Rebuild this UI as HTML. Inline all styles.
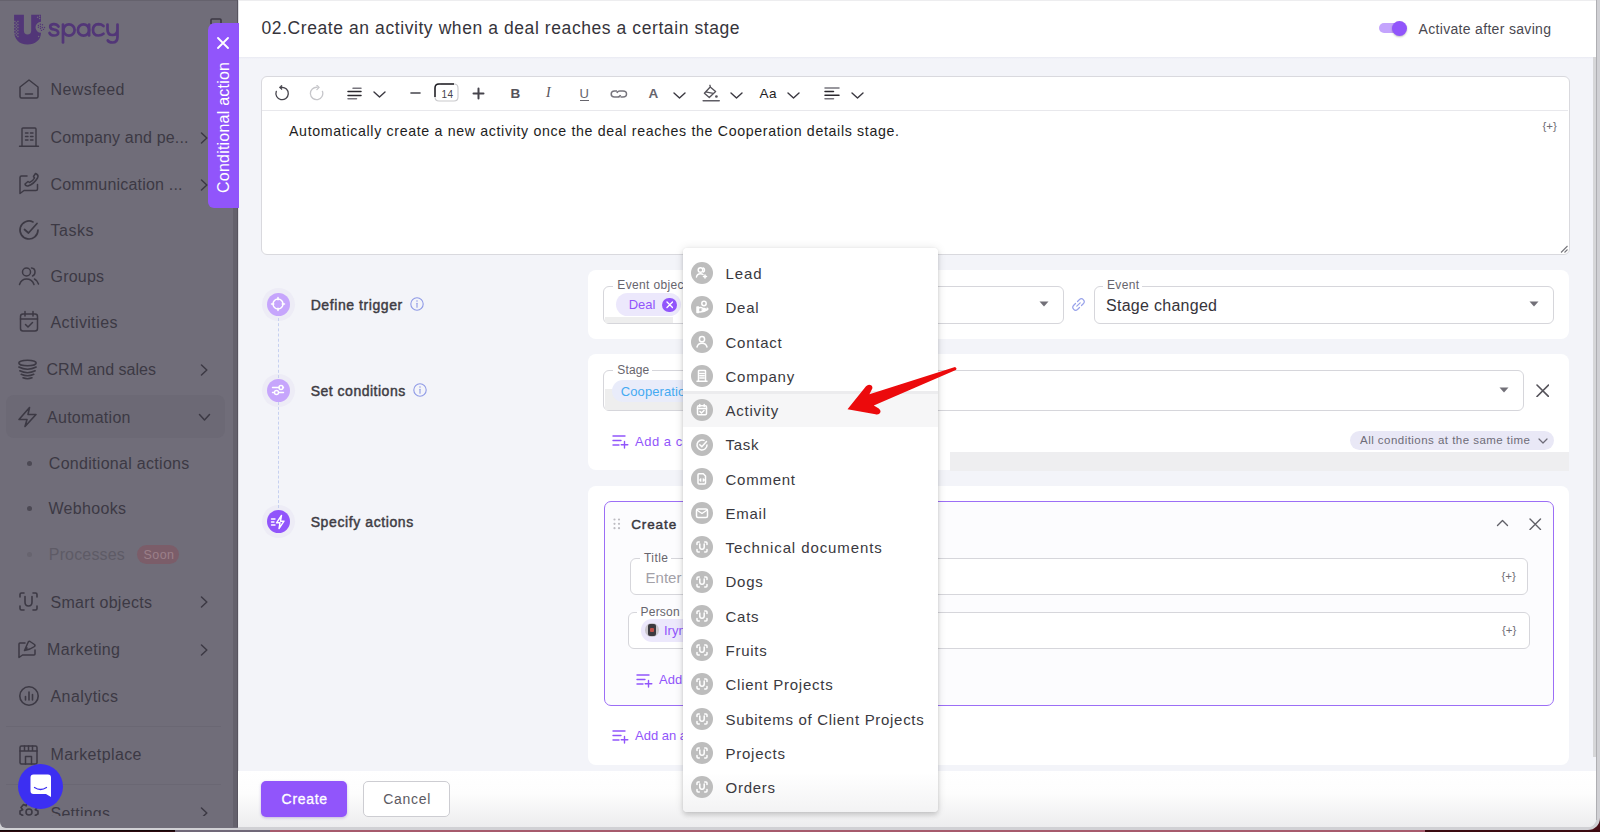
<!DOCTYPE html>
<html><head><meta charset="utf-8">
<style>
*{box-sizing:border-box;margin:0;padding:0}
html,body{width:1600px;height:832px;overflow:hidden;background:#4a0f18;font-family:"Liberation Sans",sans-serif}
.a{position:absolute}
.t{position:absolute;white-space:nowrap}
</style></head><body>
<div class="a" style="left:0px;top:830px;width:175px;height:2px;background:#2c0a0f;"></div>
<div class="a" style="left:0px;top:829.5px;width:1600px;height:1px;background:#150607;"></div>
<div class="a" style="left:175px;top:830px;width:95px;height:2px;background:#706878;"></div>
<div class="a" style="left:270px;top:830px;width:1155px;height:2px;background:#a65a6c;"></div>
<div class="a" style="left:1425px;top:830px;width:175px;height:2px;background:#3a0a10;"></div>
<div class="a" style="left:0px;top:0px;width:1600px;height:829.5px;background:#d0d0d4;border-radius:0 0 12px 0"></div>
<div class="a" style="left:1596px;top:0px;width:1.2px;height:820px;background:#aeaeb2;"></div>
<div class="a" style="left:0px;top:0px;width:238px;height:827.5px;background:#706d79;border-bottom-left-radius:6px"></div>
<svg class="a" style="left:13px;top:14px;" width="112" height="34" viewBox="0 0 112 34">
      <path d="M1.1 0.8 H10.9 V16.85 A3.65 3.65 0 0 0 18.2 16.85 V0.8 H28 V7.8 A5.5 5.5 0 0 0 28 18.8 C28 26 22 30.6 14.55 30.6 C6 30.6 1.1 25 1.1 17 Z" fill="#523678"/>
      <rect x="1.2" y="6.8" width="1.4" height="1.4" fill="#706d79"/><rect x="4.2" y="6.8" width="1.4" height="1.4" fill="#706d79"/><rect x="2.7" y="8.3" width="1.4" height="1.4" fill="#706d79"/><rect x="1.2" y="9.8" width="1.4" height="1.4" fill="#706d79"/><rect x="4.2" y="9.8" width="1.4" height="1.4" fill="#706d79"/><rect x="2.7" y="11.3" width="1.4" height="1.4" fill="#706d79"/><rect x="1.2" y="12.8" width="1.4" height="1.4" fill="#706d79"/><rect x="4.2" y="12.8" width="1.4" height="1.4" fill="#706d79"/><rect x="2.7" y="14.3" width="1.4" height="1.4" fill="#706d79"/><rect x="1.2" y="15.8" width="1.4" height="1.4" fill="#706d79"/><rect x="4.2" y="15.8" width="1.4" height="1.4" fill="#706d79"/><rect x="2.7" y="17.3" width="1.4" height="1.4" fill="#706d79"/><rect x="1.2" y="18.8" width="1.4" height="1.4" fill="#706d79"/><rect x="4.2" y="18.8" width="1.4" height="1.4" fill="#706d79"/><rect x="2.7" y="20.3" width="1.4" height="1.4" fill="#706d79"/><rect x="4.2" y="21.8" width="1.4" height="1.4" fill="#706d79"/>
      <g fill="#706d79"><circle cx="24.6" cy="3.2" r="0.75"/><circle cx="26.6" cy="2.2" r="0.75"/><circle cx="26.6" cy="4.4" r="0.75"/><circle cx="25.6" cy="22.6" r="0.75"/></g>
      <g fill="#523678"><circle cx="25.4" cy="11.4" r="0.7"/><circle cx="27.4" cy="10.3" r="0.7"/><circle cx="29.5" cy="10.8" r="0.7"/><circle cx="25.4" cy="13.3" r="0.7"/><circle cx="27.4" cy="12.5" r="0.7"/><circle cx="29.3" cy="13.5" r="0.7"/><circle cx="31.5" cy="13.5" r="0.7"/><circle cx="27.5" cy="14.5" r="0.7"/><circle cx="30.5" cy="15.4" r="0.7"/><circle cx="28.5" cy="16.4" r="0.7"/></g>
      <g fill="none" stroke="#523678" stroke-width="2.7" stroke-linecap="round">
        <path d="M45.5 12.5 Q44 10 40.5 10.2 Q37 10.5 37.2 13 Q37.5 15 41 15.5 Q45 16.2 45.2 18.5 Q45.3 21.5 41 21.5 Q37.5 21.5 36.5 19"/>
        <path d="M50 10.5 V28.5"/><circle cx="56" cy="16" r="5.6"/>
        <circle cx="70.5" cy="16" r="5.6"/><path d="M76.1 10.5 V21.5"/>
        <path d="M90.5 12 Q88.5 10.2 85.5 10.2 Q80 10.5 80 16 Q80 21.5 85.5 21.5 Q88.5 21.5 90.5 19.8"/>
        <path d="M94.5 10.5 V15.5 Q94.5 21 99.5 21 Q104.5 21 104.5 15.5 V10.5 M104.5 15 V23 Q104.5 28.5 99.5 28.5 Q96 28.5 94.8 26.5"/>
      </g></svg>
<svg class="a" style="left:210px;top:18px;" width="12" height="6" viewBox="0 0 12 6"><path d="M1 6 V2 Q1 1 2 1 H10 Q11 1 11 2 V6" fill="none" stroke="#3c3944" stroke-width="1.6"/></svg>
<svg class="a" style="left:18px;top:78px;" width="22" height="22" viewBox="0 0 22 22"><g fill="none" stroke="#3c3944" stroke-width="1.5" stroke-linecap="round" stroke-linejoin="round"><path d="M2 9 L11 2 L20 9 V18.5 Q20 20 18.5 20 H3.5 Q2 20 2 18.5 Z"/><path d="M7.5 16 H14.5"/></g></svg>
<div class="t" style="left:50.50px;top:82.00px;font-size:16px;line-height:16px;color:#3c3944;letter-spacing:0.406px;">Newsfeed</div>
<svg class="a" style="left:18px;top:126px;" width="22" height="22" viewBox="0 0 22 22"><g fill="none" stroke="#3c3944" stroke-width="1.4" stroke-linecap="round" stroke-linejoin="round"><path d="M4 20 V3 Q4 2 5 2 H17 Q18 2 18 3 V20"/><path d="M1.5 20.3 H20.5"/><path d="M7.5 7 H10 M12.5 7 H15 M7.5 10.5 H10 M12.5 10.5 H15 M7.5 14 H10 M12.5 14 H15"/></g></svg>
<div class="t" style="left:50.50px;top:130.00px;font-size:16px;line-height:16px;color:#3c3944;letter-spacing:0.175px;">Company and pe...</div>
<svg class="a" style="left:200px;top:131.5px;" width="9" height="12" viewBox="0 0 9 12"><path d="M1.5 1 L6.8 6 L1.5 11" fill="none" stroke="#3c3944" stroke-width="1.5" stroke-linecap="round" stroke-linejoin="round"/></svg>
<svg class="a" style="left:18px;top:172px;" width="23" height="23" viewBox="0 0 23 23"><g fill="none" stroke="#3c3944" stroke-width="1.5" stroke-linecap="round" stroke-linejoin="round"><path d="M9 4 H3.5 Q2 4 2 5.5 V21.5 L6 18.5 H18 Q19.5 18.5 19.5 17 V12.5"/><path d="M7 12 Q7.5 14.5 10 14 Q16 12 19.5 6 Q21 3.5 18.5 2 L17.5 1.5 L15.5 4.5 L16.5 6 Q15 9 11.5 10.5 L10 9.5 Z"/></g></svg>
<div class="t" style="left:50.50px;top:177.00px;font-size:16px;line-height:16px;color:#3c3944;letter-spacing:0.191px;">Communication ...</div>
<svg class="a" style="left:200px;top:179px;" width="9" height="12" viewBox="0 0 9 12"><path d="M1.5 1 L6.8 6 L1.5 11" fill="none" stroke="#3c3944" stroke-width="1.5" stroke-linecap="round" stroke-linejoin="round"/></svg>
<svg class="a" style="left:18px;top:219px;" width="22" height="22" viewBox="0 0 22 22"><g fill="none" stroke="#3c3944" stroke-width="1.7" stroke-linecap="round" stroke-linejoin="round"><path d="M20 11 A9 9 0 1 1 15 2.9"/><path d="M6.5 10.5 L10.5 14 L19 4.5"/></g></svg>
<div class="t" style="left:50.50px;top:223.00px;font-size:16px;line-height:16px;color:#3c3944;letter-spacing:0.523px;">Tasks</div>
<svg class="a" style="left:18px;top:266px;" width="22" height="20" viewBox="0 0 22 20"><g fill="none" stroke="#3c3944" stroke-width="1.5" stroke-linecap="round" stroke-linejoin="round"><circle cx="8.5" cy="6" r="4"/><path d="M1.5 18.5 Q3.5 13 8.5 13 Q14 13 16 18.5"/><path d="M13.5 2 Q17 2.3 17 6 Q17 9 14.5 10 M16.5 13 Q19.5 14.5 20.5 18"/></g></svg>
<div class="t" style="left:50.50px;top:269.00px;font-size:16px;line-height:16px;color:#3c3944;letter-spacing:0.206px;">Groups</div>
<svg class="a" style="left:18px;top:310px;" width="22" height="22" viewBox="0 0 22 22"><g fill="none" stroke="#3c3944" stroke-width="1.5" stroke-linecap="round" stroke-linejoin="round"><rect x="2.5" y="4" width="17" height="17" rx="2.5"/><path d="M2.5 9 H19.5 M7 1.5 V6 M15 1.5 V6 M7.5 14.5 L10 17 L14.5 12.5"/></g></svg>
<div class="t" style="left:50.50px;top:315.00px;font-size:16px;line-height:16px;color:#3c3944;letter-spacing:0.431px;">Activities</div>
<svg class="a" style="left:17px;top:359px;" width="21" height="21" viewBox="0 0 21 21"><g fill="none" stroke="#3c3944" stroke-width="1.5" stroke-linecap="round" stroke-linejoin="round"><ellipse cx="10.5" cy="4" rx="8.7" ry="2.8"/><path d="M1.8 8 Q10.5 12.5 19.2 8 M2.8 11.8 Q10.5 15.5 18.2 11.8 M4.2 15.3 Q10.5 18.3 16.8 15.3 M6 18.8 Q10.5 20.5 15 18.8"/></g></svg>
<div class="t" style="left:46.50px;top:362.00px;font-size:16px;line-height:16px;color:#3c3944;letter-spacing:0.010px;">CRM and sales</div>
<svg class="a" style="left:200px;top:364px;" width="9" height="12" viewBox="0 0 9 12"><path d="M1.5 1 L6.8 6 L1.5 11" fill="none" stroke="#3c3944" stroke-width="1.5" stroke-linecap="round" stroke-linejoin="round"/></svg>
<div class="a" style="left:6px;top:395px;width:219px;height:43px;background:#6c6975;border-radius:8px"></div>
<svg class="a" style="left:17px;top:406px;" width="21" height="22" viewBox="0 0 21 22"><g fill="none" stroke="#3c3944" stroke-width="1.6" stroke-linecap="round" stroke-linejoin="round"><path d="M12.5 1.5 L2 13.5 H10 L8 20.5 L19 8.5 H11 Z"/></g></svg>
<div class="t" style="left:47.00px;top:410.00px;font-size:16px;line-height:16px;color:#3c3944;letter-spacing:0.285px;">Automation</div>
<svg class="a" style="left:198px;top:413px;" width="13" height="9" viewBox="0 0 13 9"><path d="M1.5 1.5 L6.5 7 L11.5 1.5" fill="none" stroke="#3c3944" stroke-width="1.5" stroke-linecap="round" stroke-linejoin="round"/></svg>
<div class="a" style="left:26.5px;top:460.5px;width:5px;height:5px;background:#4c4954;border-radius:50%"></div>
<div class="t" style="left:48.80px;top:456.00px;font-size:16px;line-height:16px;color:#3c3944;letter-spacing:0.294px;">Conditional actions</div>
<div class="a" style="left:26.5px;top:506px;width:5px;height:5px;background:#4c4954;border-radius:50%"></div>
<div class="t" style="left:48.50px;top:501.00px;font-size:16px;line-height:16px;color:#3c3944;letter-spacing:0.312px;">Webhooks</div>
<div class="a" style="left:26.5px;top:552px;width:5px;height:5px;background:#67646f;border-radius:50%"></div>
<div class="t" style="left:48.80px;top:547.00px;font-size:16px;line-height:16px;color:#5e5b66;letter-spacing:0.162px;">Processes</div>
<div class="a" style="left:137px;top:545px;width:42px;height:19px;background:#7b5d69;border-radius:10px"></div>
<div class="t" style="left:143.50px;top:549.00px;font-size:12.5px;line-height:12.5px;color:#9b8089;letter-spacing:0.432px;">Soon</div>
<svg class="a" style="left:18px;top:591px;" width="21" height="21" viewBox="0 0 21 21"><g fill="none" stroke="#3c3944" stroke-width="1.6" stroke-linecap="round" stroke-linejoin="round"><path d="M2 6 V3.5 Q2 2 3.5 2 H6 M15 2 H17.5 Q19 2 19 3.5 V6 M19 15 V17.5 Q19 19 17.5 19 H15 M6 19 H3.5 Q2 19 2 17.5 V15"/><path d="M7 5.5 V11 Q7 15 10.5 15 Q14 15 14 11 V5.5"/></g></svg>
<div class="t" style="left:50.50px;top:595.00px;font-size:16px;line-height:16px;color:#3c3944;letter-spacing:0.307px;">Smart objects</div>
<svg class="a" style="left:200px;top:596px;" width="9" height="12" viewBox="0 0 9 12"><path d="M1.5 1 L6.8 6 L1.5 11" fill="none" stroke="#3c3944" stroke-width="1.5" stroke-linecap="round" stroke-linejoin="round"/></svg>
<svg class="a" style="left:17px;top:639px;" width="21" height="20" viewBox="0 0 21 20"><g fill="none" stroke="#3c3944" stroke-width="1.5" stroke-linecap="round" stroke-linejoin="round"><path d="M8 4 H3 Q2 4 2 5 V18.5 L5.5 16 H17 Q18 16 18 15 V11"/><path d="M7.5 11.5 L11 3.5 Q11.5 2 13 2.5 L17.5 5.5 Q18.5 6.5 17.5 7.5 Q13.5 10.5 7.5 11.5 Z M10 9 Q9 11 7.5 11.5"/></g></svg>
<div class="t" style="left:47.00px;top:642.00px;font-size:16px;line-height:16px;color:#3c3944;letter-spacing:0.344px;">Marketing</div>
<svg class="a" style="left:200px;top:643.5px;" width="9" height="12" viewBox="0 0 9 12"><path d="M1.5 1 L6.8 6 L1.5 11" fill="none" stroke="#3c3944" stroke-width="1.5" stroke-linecap="round" stroke-linejoin="round"/></svg>
<svg class="a" style="left:18px;top:685px;" width="22" height="22" viewBox="0 0 22 22"><g fill="none" stroke="#3c3944" stroke-width="1.6" stroke-linecap="round" stroke-linejoin="round"><circle cx="11" cy="11" r="9.2"/><path d="M7.5 15 V11.5 M11 15 V7 M14.5 15 V9.5"/></g></svg>
<div class="t" style="left:50.50px;top:689.00px;font-size:16px;line-height:16px;color:#3c3944;letter-spacing:0.434px;">Analytics</div>
<div class="a" style="left:6px;top:726px;width:215px;height:1px;background:#6a6773;"></div>
<svg class="a" style="left:18px;top:744px;" width="21" height="21" viewBox="0 0 21 21"><g fill="none" stroke="#3c3944" stroke-width="1.5" stroke-linecap="round" stroke-linejoin="round"><rect x="2" y="2" width="17" height="18" rx="1.5"/><path d="M2 7 H19 M6.5 2 V7 M10.5 2 V7 M14.5 2 V7 M7.5 20 V12.5 H13.5 V20"/></g></svg>
<div class="t" style="left:50.50px;top:747.00px;font-size:16px;line-height:16px;color:#3c3944;letter-spacing:0.384px;">Marketplace</div>
<div class="a" style="left:6px;top:784px;width:215px;height:1px;background:#6a6773;"></div>
<div class="a" style="left:0;top:790px;width:232px;height:26px;overflow:hidden"><svg class="a" style="left:18px;top:11px;" width="22" height="22" viewBox="0 0 22 22"><g fill="none" stroke="#3c3944" stroke-width="1.6" stroke-linecap="round" stroke-linejoin="round"><circle cx="11" cy="11" r="3"/><path d="M9 2 H13 L13.8 4.8 L16.5 3.5 L19 6.5 L17.3 8.8 L20 10 V13 L17.3 14.2 L19 16.5 L16.5 19.5 L13.8 18.2 L13 21 H9 L8.2 18.2 L5.5 19.5 L3 16.5 L4.7 14.2 L2 13 V10 L4.7 8.8 L3 6.5 L5.5 3.5 L8.2 4.8 Z"/></g></svg>
<div class="t" style="left:50.50px;top:16.00px;font-size:16px;line-height:16px;color:#3c3944;letter-spacing:0.241px;">Settings</div>
<svg class="a" style="left:200px;top:17px;" width="9" height="12" viewBox="0 0 9 12"><path d="M1.5 1 L6.8 6 L1.5 11" fill="none" stroke="#3c3944" stroke-width="1.5" stroke-linecap="round" stroke-linejoin="round"/></svg>
</div><div class="a" style="left:233px;top:208px;width:4px;height:619px;background:#64616c;"></div>
<div class="a" style="left:0px;top:0px;width:238px;height:1px;background:#65626d;"></div>
<div class="a" style="left:237px;top:0px;width:1px;height:827px;background:#57545f;"></div>
<div class="a" style="left:17.5px;top:763.5px;width:45px;height:45px;background:#3c2ff2;border-radius:50%"></div>
<svg class="a" style="left:30px;top:774px;" width="22" height="24" viewBox="0 0 22 24"><path d="M3.5 0.5 H18 Q21 0.5 21 3.5 V23 L16 20 H3.5 Q0.5 20 0.5 17 V3.5 Q0.5 0.5 3.5 0.5 Z" fill="#fff"/><path d="M4.5 13.5 Q10.5 17.5 16.5 13.5" fill="none" stroke="#3c2ff2" stroke-width="1.3" stroke-linecap="round"/></svg>
<div class="a" style="left:238px;top:0px;width:1358px;height:827px;background:#f3f4f9;border-bottom-right-radius:8px"></div>
<div class="a" style="left:238px;top:0px;width:1358px;height:57px;background:#fff;"></div>
<div class="a" style="left:238px;top:0px;width:1358px;height:1px;background:#ededef;"></div>
<div class="a" style="left:238px;top:57px;width:1358px;height:2px;background:linear-gradient(#e9eaf2,#f3f4f9);"></div>
<div class="a" style="left:238px;top:0px;width:1px;height:827px;background:#dcdce2;"></div>
<div class="t" style="left:261.50px;top:20.00px;font-size:17.5px;line-height:17.5px;color:#36343b;letter-spacing:0.580px;">02.Create an activity when a deal reaches a certain stage</div>
<div class="a" style="left:1379px;top:23px;width:22px;height:10px;background:#c4a4fd;border-radius:5px"></div>
<div class="a" style="left:1392px;top:20.5px;width:15px;height:15px;background:#9155fb;border-radius:50%;box-shadow:0 1px 2px rgba(0,0,0,.25)"></div>
<div class="t" style="left:1418.50px;top:22.00px;font-size:14px;line-height:14px;color:#4a4850;letter-spacing:0.322px;">Activate after saving</div>
<div class="a" style="left:1593px;top:57px;width:3px;height:700px;background:#d6d6d8;"></div>
<div class="a" style="left:261px;top:76px;width:1308.5px;height:179px;background:#fff;border:1px solid #d9d9de;border-radius:6px"></div>
<div class="a" style="left:262px;top:110px;width:1306px;height:1px;background:#e8e8ec;"></div>
<div class="t" style="left:289.00px;top:124.00px;font-size:14.2px;line-height:14.2px;color:#1e1d22;letter-spacing:0.657px;">Automatically create a new activity once the deal reaches the Cooperation details stage.</div>
<div class="t" style="left:1542.50px;top:121.00px;font-size:11.5px;line-height:11.5px;color:#6f6d75;">{+}</div>
<svg class="a" style="left:1560px;top:245px;" width="9" height="9" viewBox="0 0 9 9"><path d="M7.5 1 L1 7.5 M7.5 4.5 L4.5 7.5" stroke="#77777d" stroke-width="1.1"/></svg>
<svg class="a" style="left:274px;top:85px;" width="16" height="16" viewBox="0 0 16 16"><path d="M7.6 2.3 A6.2 6.2 0 1 1 2.3 6.3" fill="none" stroke="#46444c" stroke-width="1.3" stroke-linecap="round"/><path d="M5.2 2.4 L7.8 0.1 V4.7 Z" fill="#46444c" stroke="#46444c" stroke-width="0.6" stroke-linejoin="round"/></svg>
<svg class="a" style="left:308px;top:85px;" width="16" height="16" viewBox="0 0 16 16"><g fill="none" stroke="#c6c6ca" stroke-width="1.3" stroke-linecap="round" stroke-linejoin="round"><path d="M9.2 2.3 A6.2 6.2 0 1 0 14.4 6.3"/><path d="M8.9 0.3 L11.1 2.4 L8.9 4.6"/></g></svg>
<svg class="a" style="left:347px;top:87px;" width="15" height="13" viewBox="0 0 15 13"><g stroke-width="1.5" stroke-linecap="round"><path d="M6 1.2 H14" stroke="#77757d"/><path d="M1 4.5 H14 M1 8.5 H14" stroke="#2a282e"/><path d="M1 11.8 H9.5" stroke="#77757d"/></g></svg>
<svg class="a" style="left:373px;top:91px;" width="13" height="7" viewBox="0 0 13 7"><path d="M1 1 L6.5 6 L12 1" fill="none" stroke="#3a3840" stroke-width="1.4" stroke-linecap="round" stroke-linejoin="round"/></svg>
<svg class="a" style="left:410px;top:92px;" width="11" height="2" viewBox="0 0 11 2"><path d="M1 1 H10" stroke="#46444c" stroke-width="1.6" stroke-linecap="round"/></svg>
<svg class="a" style="left:434px;top:83px;" width="25" height="19" viewBox="0 0 25 19"><path d="M7 1 H20 Q24 1 24 5 V14 Q24 18 20 18 H5 Q1 18 1 14 V5 Q1 1 5 1" fill="none" stroke="#c9c9cc" stroke-width="1.1"/><path d="M1 14 V5 Q1 1 5 1 H20" fill="none" stroke="#1e1d22" stroke-width="1.5"/></svg>
<div class="t" style="left:441.50px;top:90.00px;font-size:10px;line-height:10px;color:#46444c;letter-spacing:0.375px;">14</div>
<svg class="a" style="left:472px;top:87px;" width="13" height="13" viewBox="0 0 13 13"><path d="M6.5 1.5 V11.5 M1.5 6.5 H11.5" stroke="#46444c" stroke-width="2" stroke-linecap="round"/></svg>
<div class="t" style="left:510.50px;top:87.00px;font-size:13.5px;line-height:13.5px;color:#55535a;font-weight:700;">B</div>
<div class="t" style="left:546.00px;top:86.00px;font-size:14px;line-height:14px;color:#55535a;font-family:'Liberation Serif',serif;"><i>I</i></div>
<div class="t" style="left:579.50px;top:87.00px;font-size:13px;line-height:13px;color:#66646c;">U</div>
<div class="a" style="left:580px;top:100px;width:9px;height:1.2px;background:#66646c;"></div>
<svg class="a" style="left:610px;top:89px;" width="18" height="10" viewBox="0 0 18 10"><g fill="none" stroke="#77757d" stroke-width="1.5"><path d="M7 2 H4.5 Q1.2 2 1.2 5 Q1.2 8 4.5 8 H7.5 Q10 8 10.5 6"/><path d="M10.5 8 H13 Q16.5 8 16.5 5 Q16.5 2 13 2 H10 Q7.5 2 7 4"/></g></svg>
<div class="t" style="left:648.50px;top:87.00px;font-size:13.5px;line-height:13.5px;color:#66646c;font-weight:700;">A</div>
<svg class="a" style="left:672.5px;top:91.5px;" width="13" height="7" viewBox="0 0 13 7"><path d="M1 1 L6.5 6 L12 1" fill="none" stroke="#3a3840" stroke-width="1.4" stroke-linecap="round" stroke-linejoin="round"/></svg>
<svg class="a" style="left:702px;top:84px;" width="19" height="18" viewBox="0 0 19 18"><g fill="none" stroke="#55535a" stroke-width="1.35" stroke-linejoin="round" stroke-linecap="round"><path d="M8.2 3 L13.6 7.6 L7.3 13.5 L2.4 9.3 Z M3.6 7.9 L11.2 9.4 M7.9 1.3 L8.4 3.1"/></g><circle cx="14.4" cy="12.5" r="1.35" fill="#55535a"/><path d="M1.2 16.8 H17.2" stroke="#5f5d65" stroke-width="1.6" stroke-linecap="round"/></svg>
<svg class="a" style="left:729.5px;top:91.5px;" width="13" height="7" viewBox="0 0 13 7"><path d="M1 1 L6.5 6 L12 1" fill="none" stroke="#3a3840" stroke-width="1.4" stroke-linecap="round" stroke-linejoin="round"/></svg>
<div class="t" style="left:759.50px;top:87.00px;font-size:13.5px;line-height:13.5px;color:#1e1d22;letter-spacing:0.484px;">Aa</div>
<svg class="a" style="left:786.5px;top:91.5px;" width="13" height="7" viewBox="0 0 13 7"><path d="M1 1 L6.5 6 L12 1" fill="none" stroke="#3a3840" stroke-width="1.4" stroke-linecap="round" stroke-linejoin="round"/></svg>
<svg class="a" style="left:824px;top:87px;" width="16" height="13" viewBox="0 0 16 13"><g stroke-width="1.5" stroke-linecap="round"><path d="M1 1 H15" stroke="#77757d"/><path d="M1 4.5 H9.5 M1 8.3 H15" stroke="#2a282e"/><path d="M1 11.8 H9.5" stroke="#77757d"/></g></svg>
<svg class="a" style="left:850.5px;top:91.5px;" width="13" height="7" viewBox="0 0 13 7"><path d="M1 1 L6.5 6 L12 1" fill="none" stroke="#3a3840" stroke-width="1.4" stroke-linecap="round" stroke-linejoin="round"/></svg>
<div class="a" style="left:261.9px;top:287.8px;width:33px;height:33px;background:#edecf6;border-radius:50%"></div>
<div class="a" style="left:261.9px;top:373.8px;width:33px;height:33px;background:#edecf6;border-radius:50%"></div>
<div class="a" style="left:261.9px;top:505.0px;width:33px;height:33px;background:#edecf6;border-radius:50%"></div>
<div class="a" style="left:278px;top:318px;width:0;height:60px;border-left:1px dashed #c6d0f0"></div>
<div class="a" style="left:278px;top:402px;width:0;height:106px;border-left:1px dashed #c6d0f0"></div>
<div class="a" style="left:266.9px;top:292.8px;width:23px;height:23px;background:#c6a5fc;border-radius:50%"></div>
<svg class="a" style="left:270.4px;top:296.3px;" width="16" height="16" viewBox="0 0 16 16"><g fill="none" stroke="#fff" stroke-width="1.5" stroke-linecap="round"><circle cx="8" cy="8" r="5"/><path d="M8 1.5 V3.8 M8 12.2 V14.5 M1.5 8 H3.8 M12.2 8 H14.5"/></g></svg>
<div class="t" style="left:310.70px;top:298.00px;font-size:14px;line-height:14px;color:#3e3c44;letter-spacing:0.573px;-webkit-text-stroke:0.45px #3e3c44;">Define trigger</div>
<svg class="a" style="left:409.8px;top:297.3px;" width="14" height="14" viewBox="0 0 14 14"><g fill="none" stroke="#8f9ae6" stroke-width="1.1"><circle cx="7" cy="7" r="6.2"/><path d="M7 6.2 V10.3" stroke-linecap="round"/></g><circle cx="7" cy="4.1" r="0.75" fill="#8f9ae6"/></svg>
<div class="a" style="left:266.9px;top:378.8px;width:23px;height:23px;background:#c6a5fc;border-radius:50%"></div>
<svg class="a" style="left:270.4px;top:382.3px;" width="16" height="16" viewBox="0 0 16 16"><g fill="none" stroke="#fff" stroke-width="1.4" stroke-linecap="round"><path d="M2.5 5.5 H9 M13 5.5 H13.5 M2.5 10.5 H4 M9 10.5 H13.5"/><circle cx="11" cy="5.5" r="2"/><circle cx="6.5" cy="10.5" r="2"/></g></svg>
<div class="t" style="left:310.70px;top:384.00px;font-size:14px;line-height:14px;color:#3e3c44;letter-spacing:0.504px;-webkit-text-stroke:0.45px #3e3c44;">Set conditions</div>
<svg class="a" style="left:412.7px;top:383.3px;" width="14" height="14" viewBox="0 0 14 14"><g fill="none" stroke="#8f9ae6" stroke-width="1.1"><circle cx="7" cy="7" r="6.2"/><path d="M7 6.2 V10.3" stroke-linecap="round"/></g><circle cx="7" cy="4.1" r="0.75" fill="#8f9ae6"/></svg>
<div class="a" style="left:266.9px;top:510.0px;width:23px;height:23px;background:#9155fb;border-radius:50%"></div>
<svg class="a" style="left:270.4px;top:513.5px;" width="16" height="16" viewBox="0 0 16 16"><g fill="none" stroke="#fff" stroke-width="1.4" stroke-linecap="round" stroke-linejoin="round"><path d="M1.5 5 H5 M1.5 8 H4 M1.5 11 H5"/><path d="M11.5 1.5 L6.5 8.8 H10 L9 14.5 L14 7.2 H10.5 Z"/></g></svg>
<div class="t" style="left:310.70px;top:515.00px;font-size:14px;line-height:14px;color:#3e3c44;letter-spacing:0.595px;-webkit-text-stroke:0.45px #3e3c44;">Specify actions</div>
<div class="a" style="left:588px;top:270px;width:981px;height:69px;background:#fff;border-radius:8px"></div>
<div class="a" style="left:603px;top:285.5px;width:460.5px;height:38px;background:#fff;border:1px solid #d6d6db;border-radius:6px"></div>
<div class="a" style="left:613px;top:284.5px;width:77px;height:2px;background:#fff;"></div>
<div class="t" style="left:617.30px;top:279.00px;font-size:12px;line-height:12px;color:#67656d;letter-spacing:0.359px;">Event object</div>
<div class="a" style="left:605px;top:317px;width:68px;height:6px;background:#eeeeee;"></div>
<div class="a" style="left:616px;top:293px;width:65px;height:23px;background:#ece8fc;border-radius:12px"></div>
<div class="t" style="left:628.80px;top:298.00px;font-size:13px;line-height:13px;color:#9155fb;letter-spacing:-0.083px;">Deal</div>
<div class="a" style="left:662px;top:297.5px;width:14.5px;height:14.5px;background:#9155fb;border-radius:50%"></div>
<svg class="a" style="left:665.5px;top:301px;" width="7.5" height="7.5" viewBox="0 0 7.5 7.5"><path d="M1 1 L6.5 6.5 M6.5 1 L1 6.5" stroke="#fff" stroke-width="1.4" stroke-linecap="round"/></svg>
<svg class="a" style="left:1039px;top:301.4px;" width="10" height="6" viewBox="0 0 10 6"><path d="M0.5 0.5 H9.5 L5 5.5 Z" fill="#727078"/></svg>
<svg class="a" style="left:1071px;top:297px;" width="15" height="15" viewBox="0 0 15 15"><g fill="none" stroke="#98a2ea" stroke-width="1.2" stroke-linecap="round"><path d="M5.8 9.2 L9.2 5.8 M6.5 4.5 L8.5 2.5 Q10.5 0.8 12.3 2.7 Q14.2 4.5 12.5 6.5 L10.5 8.5 M8.5 10.5 L6.5 12.5 Q4.5 14.2 2.7 12.3 Q0.8 10.5 2.5 8.5 L4.5 6.5"/></g></svg>
<div class="a" style="left:1094px;top:285.5px;width:460px;height:38px;background:#fff;border:1px solid #d6d6db;border-radius:6px"></div>
<div class="a" style="left:1103px;top:284.5px;width:39px;height:2px;background:#fff;"></div>
<div class="t" style="left:1107.00px;top:279.00px;font-size:12px;line-height:12px;color:#67656d;letter-spacing:0.328px;">Event</div>
<div class="t" style="left:1106.00px;top:298.00px;font-size:16px;line-height:16px;color:#36343b;letter-spacing:0.279px;">Stage changed</div>
<svg class="a" style="left:1528.8px;top:301.4px;" width="10" height="6" viewBox="0 0 10 6"><path d="M0.5 0.5 H9.5 L5 5.5 Z" fill="#727078"/></svg>
<div class="a" style="left:588px;top:354px;width:981px;height:116px;background:#fff;border-radius:8px"></div>
<div class="a" style="left:603px;top:369.8px;width:920.5px;height:41px;background:#fff;border:1px solid #d6d6db;border-radius:6px"></div>
<div class="a" style="left:613px;top:368.8px;width:39px;height:2px;background:#fff;"></div>
<div class="t" style="left:617.30px;top:364.00px;font-size:12px;line-height:12px;color:#67656d;letter-spacing:0.160px;">Stage</div>
<div class="a" style="left:605px;top:388.5px;width:80px;height:21px;background:#eeeeee;"></div>
<div class="a" style="left:612px;top:380px;width:90px;height:22px;background:#e9ecfa;border-radius:11px"></div>
<div class="t" style="left:620.70px;top:385.00px;font-size:13px;line-height:13px;color:#45aaf2;letter-spacing:0.117px;">Cooperation</div>
<svg class="a" style="left:1498.7px;top:387.3px;" width="10" height="6" viewBox="0 0 10 6"><path d="M0.5 0.5 H9.5 L5 5.5 Z" fill="#727078"/></svg>
<svg class="a" style="left:1535.5px;top:383.5px;" width="13.5" height="13.5" viewBox="0 0 13.5 13.5"><path d="M1 1 L12.5 12.5 M12.5 1 L1 12.5" stroke="#55535a" stroke-width="1.6" stroke-linecap="round"/></svg>
<svg class="a" style="left:612px;top:434px;" width="17" height="15" viewBox="0 0 17 15"><g fill="none" stroke="#9155fb" stroke-width="1.4" stroke-linecap="round"><path d="M1 2 H13 M1 6.5 H9 M1 11 H7 M12.5 7.5 V14 M9.2 10.8 H15.8"/></g></svg>
<div class="t" style="left:635.00px;top:435.00px;font-size:13px;line-height:13px;color:#9155fb;letter-spacing:0.527px;">Add a condition</div>
<div class="a" style="left:1350px;top:431.3px;width:204px;height:18.5px;background:#e9e8f6;border-radius:10px"></div>
<div class="t" style="left:1360.00px;top:435.00px;font-size:11.5px;line-height:11.5px;color:#6e6c78;letter-spacing:0.468px;">All conditions at the same time</div>
<svg class="a" style="left:1538px;top:437.5px;" width="10" height="6" viewBox="0 0 10 6"><path d="M1 1 L5.0 5 L9 1" fill="none" stroke="#6e6c78" stroke-width="1.2" stroke-linecap="round" stroke-linejoin="round"/></svg>
<div class="a" style="left:949.7px;top:451.8px;width:619.3px;height:19px;background:#eeeef0;"></div>
<div class="a" style="left:588px;top:486px;width:981px;height:278.5px;background:#fff;border-radius:8px"></div>
<div class="a" style="left:603.5px;top:501px;width:950.5px;height:204.5px;background:#fcfcfe;border:1px solid #9c6ef6;border-radius:7px"></div>
<svg class="a" style="left:612.5px;top:518px;" width="8" height="12" viewBox="0 0 8 12"><g fill="#bdbcc2"><circle cx="1.5" cy="1.5" r="1.1"/><circle cx="6" cy="1.5" r="1.1"/><circle cx="1.5" cy="5.8" r="1.1"/><circle cx="6" cy="5.8" r="1.1"/><circle cx="1.5" cy="10.2" r="1.1"/><circle cx="6" cy="10.2" r="1.1"/></g></svg>
<div class="t" style="left:631.20px;top:518.00px;font-size:13.5px;line-height:13.5px;color:#3a383f;letter-spacing:0.894px;-webkit-text-stroke:0.45px #3a383f;">Create</div>
<svg class="a" style="left:1495.5px;top:519px;" width="13" height="8" viewBox="0 0 13 8"><path d="M1.5 6.5 L6.5 1.5 L11.5 6.5" fill="none" stroke="#606067" stroke-width="1.35" stroke-linecap="round" stroke-linejoin="round"/></svg>
<svg class="a" style="left:1529px;top:517.5px;" width="12.5" height="12.5" viewBox="0 0 12.5 12.5"><path d="M1 1 L11.5 11.5 M11.5 1 L1 11.5" stroke="#606067" stroke-width="1.4" stroke-linecap="round"/></svg>
<div class="a" style="left:629.8px;top:558.3px;width:898px;height:37px;background:#fff;border:1px solid #d6d6db;border-radius:6px"></div>
<div class="a" style="left:640px;top:557.3px;width:31px;height:2px;background:#fff;"></div>
<div class="t" style="left:644.00px;top:552.00px;font-size:12px;line-height:12px;color:#67656d;letter-spacing:0.441px;">Title</div>
<div class="t" style="left:645.60px;top:570.00px;font-size:15px;line-height:15px;color:#a3a1a8;">Enter</div>
<div class="t" style="left:1501.50px;top:571.00px;font-size:11.5px;line-height:11.5px;color:#6f6d75;">{+}</div>
<div class="a" style="left:627.8px;top:612px;width:902px;height:37.2px;background:#fff;border:1px solid #d6d6db;border-radius:6px"></div>
<div class="a" style="left:636.6px;top:611px;width:46px;height:2px;background:#fff;"></div>
<div class="t" style="left:640.60px;top:606.00px;font-size:12px;line-height:12px;color:#67656d;letter-spacing:0.194px;">Person</div>
<div class="a" style="left:640.6px;top:619px;width:60px;height:22.6px;background:#ece8fc;border-radius:11px"></div>
<div class="a" style="left:645px;top:623px;width:13.5px;height:13.5px;background:#c9c6cc;border-radius:50%"></div>
<div class="a" style="left:647.5px;top:624px;width:8.5px;height:11.5px;background:#3c3a40;border-radius:2px"></div>
<div class="a" style="left:650px;top:628px;width:4px;height:4px;background:#c0504a;border-radius:1px"></div>
<div class="t" style="left:664.00px;top:624.00px;font-size:13px;line-height:13px;color:#9155fb;">Iryna</div>
<div class="t" style="left:1502.00px;top:625.00px;font-size:11.5px;line-height:11.5px;color:#6f6d75;">{+}</div>
<svg class="a" style="left:635.5px;top:672.5px;" width="17" height="15" viewBox="0 0 17 15"><g fill="none" stroke="#9155fb" stroke-width="1.4" stroke-linecap="round"><path d="M1 2 H13 M1 6.5 H9 M1 11 H7 M12.5 7.5 V14 M9.2 10.8 H15.8"/></g></svg>
<div class="t" style="left:659.00px;top:673.00px;font-size:13px;line-height:13px;color:#9155fb;">Add field</div>
<svg class="a" style="left:612px;top:728.5px;" width="17" height="15" viewBox="0 0 17 15"><g fill="none" stroke="#9155fb" stroke-width="1.4" stroke-linecap="round"><path d="M1 2 H13 M1 6.5 H9 M1 11 H7 M12.5 7.5 V14 M9.2 10.8 H15.8"/></g></svg>
<div class="t" style="left:635.00px;top:729.00px;font-size:13px;line-height:13px;color:#9155fb;">Add an action</div>
<div class="a" style="left:238px;top:771px;width:1358px;height:56px;background:linear-gradient(#fff 0%,#fdfdfd 40%,#ececee 100%);border-bottom-right-radius:8px"></div>
<div class="a" style="left:261px;top:781.3px;width:86px;height:35.6px;background:#9155fb;border-radius:5px;box-shadow:0 1px 3px rgba(60,0,160,.25)"></div>
<div class="t" style="left:281.60px;top:792.00px;font-size:14px;line-height:14px;color:#fff;letter-spacing:0.694px;-webkit-text-stroke:0.3px #fff;">Create</div>
<div class="a" style="left:362.8px;top:781.3px;width:87px;height:35.6px;background:#fff;border:1px solid #cdcdd2;border-radius:5px"></div>
<div class="t" style="left:383.30px;top:792.00px;font-size:14px;line-height:14px;color:#5c5a62;letter-spacing:0.681px;">Cancel</div>
<div class="a" style="left:208px;top:22.5px;width:30.6px;height:185.5px;background:#9155fb;border-radius:7px 0 0 6px"></div>
<svg class="a" style="left:217px;top:37px;" width="12" height="12" viewBox="0 0 12 12"><path d="M1 1 L11 11 M11 1 L1 11" stroke="#fff" stroke-width="1.8" stroke-linecap="round"/></svg>
<div class="a" style="left:224px;top:128px;width:0;height:0"><div class="t" style="left:-65px;top:-9px;width:130px;height:18px;transform:rotate(-90deg);color:#fff;font-size:16px;line-height:18px;text-align:center;letter-spacing:0.223px;">Conditional action</div></div>
<div class="a" style="left:683.3px;top:248px;width:254.5px;height:564.3px;background:linear-gradient(#fff 0%,#fff 93%,#f3f3f4 100%);border-radius:4px;box-shadow:0 0 10px rgba(0,0,0,.10),0 3px 5px rgba(0,0,0,.14),0 0 1px rgba(0,0,0,.12)"></div>
<div class="a" style="left:683.3px;top:391.4px;width:254.5px;height:2.4px;background:#ececee;"></div>
<div class="a" style="left:683.3px;top:393.8px;width:254.5px;height:33px;background:#f6f6f7;"></div>
<div class="a" style="left:691px;top:262.2px;width:22px;height:22px;background:#bdbdbd;border-radius:50%"></div>
<svg class="a" style="left:691px;top:262.2px;" width="22" height="22" viewBox="0 0 22 22"><g fill="none" stroke="#fff" stroke-width="1.5" stroke-linecap="round" stroke-linejoin="round"><circle cx="9.5" cy="8" r="2.3"/><path d="M5.5 15 Q6 11.8 9.5 11.8 Q11 11.8 12 12.5 M12.2 6 Q13.5 6.5 13.5 8 Q13.5 9.5 12.3 10 M14 13 V16 M12.5 14.5 H15.5"/></g></svg>
<div class="t" style="left:725.50px;top:266.00px;font-size:15px;line-height:15px;color:#3a3940;letter-spacing:0.875px;">Lead</div>
<div class="a" style="left:691px;top:296.46999999999997px;width:22px;height:22px;background:#bdbdbd;border-radius:50%"></div>
<svg class="a" style="left:691px;top:296.46999999999997px;" width="22" height="22" viewBox="0 0 22 22"><g fill="none" stroke="#fff" stroke-width="1.5" stroke-linecap="round" stroke-linejoin="round"><circle cx="13" cy="7.5" r="2.2"/><path d="M6 11 H7.5 V16.5 H6 Z M7.5 12 Q10 11 12 12.5 H13.5 Q14.5 12.5 14.5 13.5 L11 14 M7.5 15.8 Q11 17 16.5 13.5 Q17.3 12.5 16 12.3"/></g></svg>
<div class="t" style="left:725.50px;top:300.00px;font-size:15px;line-height:15px;color:#3a3940;letter-spacing:0.75px;">Deal</div>
<div class="a" style="left:691px;top:330.74px;width:22px;height:22px;background:#bdbdbd;border-radius:50%"></div>
<svg class="a" style="left:691px;top:330.74px;" width="22" height="22" viewBox="0 0 22 22"><g fill="none" stroke="#fff" stroke-width="1.5" stroke-linecap="round" stroke-linejoin="round"><circle cx="11" cy="8.2" r="2.6"/><path d="M6 16 Q7 12.3 11 12.3 Q15 12.3 16 16"/></g></svg>
<div class="t" style="left:725.50px;top:335.00px;font-size:15px;line-height:15px;color:#3a3940;letter-spacing:0.75px;">Contact</div>
<div class="a" style="left:691px;top:365.01px;width:22px;height:22px;background:#bdbdbd;border-radius:50%"></div>
<svg class="a" style="left:691px;top:365.01px;" width="22" height="22" viewBox="0 0 22 22"><g fill="none" stroke="#fff" stroke-width="1.5" stroke-linecap="round" stroke-linejoin="round"><path d="M7.5 16 V6 Q7.5 5.5 8 5.5 H14 Q14.5 5.5 14.5 6 V16 M6 16.2 H16 M9 8.5 H13 M9 10.8 H13 M9 13.1 H13"/></g></svg>
<div class="t" style="left:725.50px;top:369.00px;font-size:15px;line-height:15px;color:#3a3940;letter-spacing:0.75px;">Company</div>
<div class="a" style="left:691px;top:399.28px;width:22px;height:22px;background:#bdbdbd;border-radius:50%"></div>
<svg class="a" style="left:691px;top:399.28px;" width="22" height="22" viewBox="0 0 22 22"><g fill="none" stroke="#fff" stroke-width="1.5" stroke-linecap="round" stroke-linejoin="round"><rect x="6.5" y="6.8" width="9" height="9" rx="1.2"/><path d="M6.5 9.5 H15.5 M8.8 5.5 V7.5 M13.2 5.5 V7.5 M9 12.5 L10.5 14 L13 11.5"/></g></svg>
<div class="t" style="left:725.50px;top:403.00px;font-size:15px;line-height:15px;color:#3a3940;letter-spacing:0.75px;">Activity</div>
<div class="a" style="left:691px;top:433.55px;width:22px;height:22px;background:#bdbdbd;border-radius:50%"></div>
<svg class="a" style="left:691px;top:433.55px;" width="22" height="22" viewBox="0 0 22 22"><g fill="none" stroke="#fff" stroke-width="1.5" stroke-linecap="round" stroke-linejoin="round"><path d="M16 11 A5 5 0 1 1 13 6.4"/><path d="M8.8 10.8 L10.8 12.8 L15.5 7.5"/></g></svg>
<div class="t" style="left:725.50px;top:437.00px;font-size:15px;line-height:15px;color:#3a3940;letter-spacing:0.75px;">Task</div>
<div class="a" style="left:691px;top:467.82px;width:22px;height:22px;background:#bdbdbd;border-radius:50%"></div>
<svg class="a" style="left:691px;top:467.82px;" width="22" height="22" viewBox="0 0 22 22"><g fill="none" stroke="#fff" stroke-width="1.5" stroke-linecap="round" stroke-linejoin="round"><path d="M8 5.8 H12.3 L14.5 8 V15 Q14.5 16 13.5 16 H8 Q7 16 7 15 V6.8 Q7 5.8 8 5.8 Z M9.8 11 L9 12 L9.8 13 M12.2 11 L13 12 L12.2 13"/></g></svg>
<div class="t" style="left:725.50px;top:472.00px;font-size:15px;line-height:15px;color:#3a3940;letter-spacing:0.75px;">Comment</div>
<div class="a" style="left:691px;top:502.09000000000003px;width:22px;height:22px;background:#bdbdbd;border-radius:50%"></div>
<svg class="a" style="left:691px;top:502.09000000000003px;" width="22" height="22" viewBox="0 0 22 22"><g fill="none" stroke="#fff" stroke-width="1.5" stroke-linecap="round" stroke-linejoin="round"><rect x="5.5" y="7" width="11" height="8.5" rx="1.5"/><path d="M5.8 8 L11 11.5 L16.2 8"/></g></svg>
<div class="t" style="left:725.50px;top:506.00px;font-size:15px;line-height:15px;color:#3a3940;letter-spacing:0.75px;">Email</div>
<div class="a" style="left:691px;top:536.36px;width:22px;height:22px;background:#bdbdbd;border-radius:50%"></div>
<svg class="a" style="left:691px;top:536.36px;" width="22" height="22" viewBox="0 0 22 22"><g fill="none" stroke="#fff" stroke-width="1.5" stroke-linecap="round" stroke-linejoin="round"><path d="M6 8.5 V7 Q6 6 7 6 H8.3 M13.7 6 H15 Q16 6 16 7 V8.5 M16 13.5 V15 Q16 16 15 16 H13.7 M8.3 16 H7 Q6 16 6 15 V13.5 M8.8 8 V11 Q8.8 13.3 11 13.3 Q13.2 13.3 13.2 11 V8"/></g></svg>
<div class="t" style="left:725.50px;top:540.00px;font-size:15px;line-height:15px;color:#3a3940;letter-spacing:0.896px;">Technical documents</div>
<div class="a" style="left:691px;top:570.63px;width:22px;height:22px;background:#bdbdbd;border-radius:50%"></div>
<svg class="a" style="left:691px;top:570.63px;" width="22" height="22" viewBox="0 0 22 22"><g fill="none" stroke="#fff" stroke-width="1.5" stroke-linecap="round" stroke-linejoin="round"><path d="M6 8.5 V7 Q6 6 7 6 H8.3 M13.7 6 H15 Q16 6 16 7 V8.5 M16 13.5 V15 Q16 16 15 16 H13.7 M8.3 16 H7 Q6 16 6 15 V13.5 M8.8 8 V11 Q8.8 13.3 11 13.3 Q13.2 13.3 13.2 11 V8"/></g></svg>
<div class="t" style="left:725.50px;top:574.00px;font-size:15px;line-height:15px;color:#3a3940;letter-spacing:0.75px;">Dogs</div>
<div class="a" style="left:691px;top:604.9000000000001px;width:22px;height:22px;background:#bdbdbd;border-radius:50%"></div>
<svg class="a" style="left:691px;top:604.9000000000001px;" width="22" height="22" viewBox="0 0 22 22"><g fill="none" stroke="#fff" stroke-width="1.5" stroke-linecap="round" stroke-linejoin="round"><path d="M6 8.5 V7 Q6 6 7 6 H8.3 M13.7 6 H15 Q16 6 16 7 V8.5 M16 13.5 V15 Q16 16 15 16 H13.7 M8.3 16 H7 Q6 16 6 15 V13.5 M8.8 8 V11 Q8.8 13.3 11 13.3 Q13.2 13.3 13.2 11 V8"/></g></svg>
<div class="t" style="left:725.50px;top:609.00px;font-size:15px;line-height:15px;color:#3a3940;letter-spacing:0.75px;">Cats</div>
<div class="a" style="left:691px;top:639.1700000000001px;width:22px;height:22px;background:#bdbdbd;border-radius:50%"></div>
<svg class="a" style="left:691px;top:639.1700000000001px;" width="22" height="22" viewBox="0 0 22 22"><g fill="none" stroke="#fff" stroke-width="1.5" stroke-linecap="round" stroke-linejoin="round"><path d="M6 8.5 V7 Q6 6 7 6 H8.3 M13.7 6 H15 Q16 6 16 7 V8.5 M16 13.5 V15 Q16 16 15 16 H13.7 M8.3 16 H7 Q6 16 6 15 V13.5 M8.8 8 V11 Q8.8 13.3 11 13.3 Q13.2 13.3 13.2 11 V8"/></g></svg>
<div class="t" style="left:725.50px;top:643.00px;font-size:15px;line-height:15px;color:#3a3940;letter-spacing:0.75px;">Fruits</div>
<div class="a" style="left:691px;top:673.44px;width:22px;height:22px;background:#bdbdbd;border-radius:50%"></div>
<svg class="a" style="left:691px;top:673.44px;" width="22" height="22" viewBox="0 0 22 22"><g fill="none" stroke="#fff" stroke-width="1.5" stroke-linecap="round" stroke-linejoin="round"><path d="M6 8.5 V7 Q6 6 7 6 H8.3 M13.7 6 H15 Q16 6 16 7 V8.5 M16 13.5 V15 Q16 16 15 16 H13.7 M8.3 16 H7 Q6 16 6 15 V13.5 M8.8 8 V11 Q8.8 13.3 11 13.3 Q13.2 13.3 13.2 11 V8"/></g></svg>
<div class="t" style="left:725.50px;top:677.00px;font-size:15px;line-height:15px;color:#3a3940;letter-spacing:0.75px;">Client Projects</div>
<div class="a" style="left:691px;top:707.71px;width:22px;height:22px;background:#bdbdbd;border-radius:50%"></div>
<svg class="a" style="left:691px;top:707.71px;" width="22" height="22" viewBox="0 0 22 22"><g fill="none" stroke="#fff" stroke-width="1.5" stroke-linecap="round" stroke-linejoin="round"><path d="M6 8.5 V7 Q6 6 7 6 H8.3 M13.7 6 H15 Q16 6 16 7 V8.5 M16 13.5 V15 Q16 16 15 16 H13.7 M8.3 16 H7 Q6 16 6 15 V13.5 M8.8 8 V11 Q8.8 13.3 11 13.3 Q13.2 13.3 13.2 11 V8"/></g></svg>
<div class="t" style="left:725.50px;top:712.00px;font-size:15px;line-height:15px;color:#3a3940;letter-spacing:0.697px;">Subitems of Client Projects</div>
<div class="a" style="left:691px;top:741.98px;width:22px;height:22px;background:#bdbdbd;border-radius:50%"></div>
<svg class="a" style="left:691px;top:741.98px;" width="22" height="22" viewBox="0 0 22 22"><g fill="none" stroke="#fff" stroke-width="1.5" stroke-linecap="round" stroke-linejoin="round"><path d="M6 8.5 V7 Q6 6 7 6 H8.3 M13.7 6 H15 Q16 6 16 7 V8.5 M16 13.5 V15 Q16 16 15 16 H13.7 M8.3 16 H7 Q6 16 6 15 V13.5 M8.8 8 V11 Q8.8 13.3 11 13.3 Q13.2 13.3 13.2 11 V8"/></g></svg>
<div class="t" style="left:725.50px;top:746.00px;font-size:15px;line-height:15px;color:#3a3940;letter-spacing:0.75px;">Projects</div>
<div class="a" style="left:691px;top:776.25px;width:22px;height:22px;background:#bdbdbd;border-radius:50%"></div>
<svg class="a" style="left:691px;top:776.25px;" width="22" height="22" viewBox="0 0 22 22"><g fill="none" stroke="#fff" stroke-width="1.5" stroke-linecap="round" stroke-linejoin="round"><path d="M6 8.5 V7 Q6 6 7 6 H8.3 M13.7 6 H15 Q16 6 16 7 V8.5 M16 13.5 V15 Q16 16 15 16 H13.7 M8.3 16 H7 Q6 16 6 15 V13.5 M8.8 8 V11 Q8.8 13.3 11 13.3 Q13.2 13.3 13.2 11 V8"/></g></svg>
<div class="t" style="left:725.50px;top:780.00px;font-size:15px;line-height:15px;color:#3a3940;letter-spacing:0.75px;">Orders</div>
<svg class="a" style="left:840px;top:360px;" width="120" height="60" viewBox="0 0 120 60"><path d="M115 7 Q117.5 8.2 115.8 10 L33.8 45.6 L38.8 48.6 Q42.2 51.5 39 54 Q37.5 54.8 35.5 54.3 L7.5 49.2 L26 26.2 Q28.5 23.6 31.2 25.3 Q33.3 27.3 31.8 29.6 L29.4 34.2 Z" fill="#ec0a0c"/></svg>
</body></html>
